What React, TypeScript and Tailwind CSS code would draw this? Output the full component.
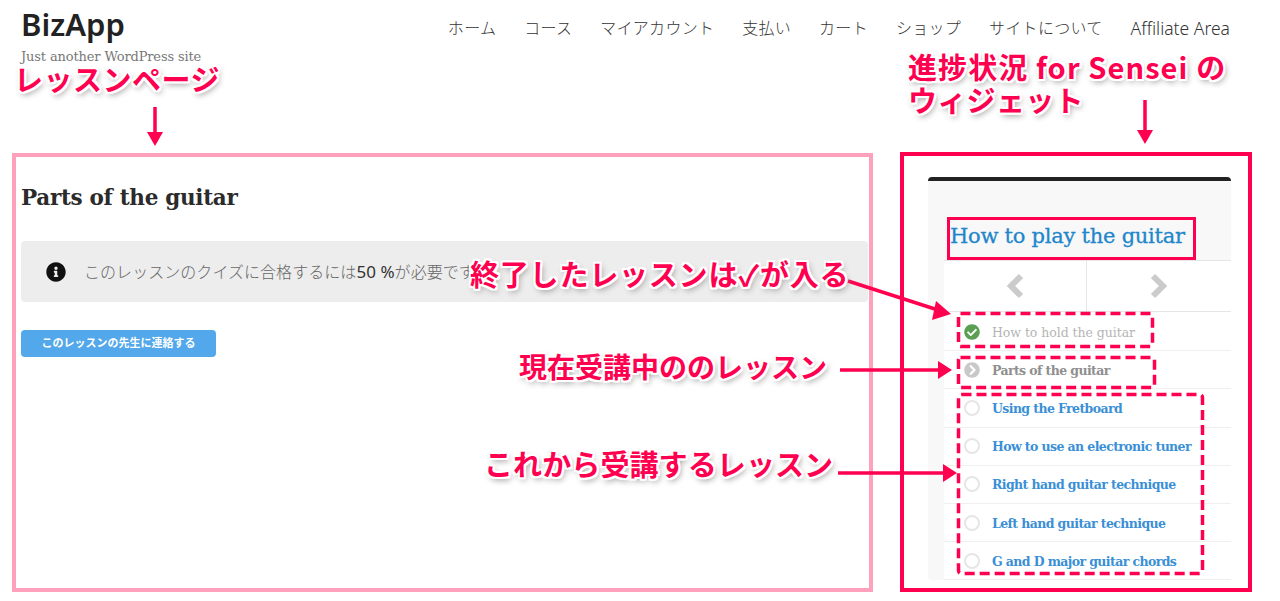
import { FaCheckCircle, FaChevronCircleRight, FaInfoCircle } from "react-icons/fa";

const navItems = ["ホーム", "コース", "マイアカウント", "支払い", "カート", "ショップ", "サイトについて"];

const lessons = [
  { title: "How to hold the guitar", state: "done" },
  { title: "Parts of the guitar", state: "current" },
  { title: "Using the Fretboard", state: "todo" },
  { title: "How to use an electronic tuner", state: "todo" },
  { title: "Right hand guitar technique", state: "todo" },
  { title: "Left hand guitar technique", state: "todo" },
  { title: "G and D major guitar chords", state: "todo" },
];

const labels = [
  { text: "レッスンページ", className: "left-[14px] top-[58px] text-[29px] tracking-[0.5px]" },
  { text: "進捗状況 for Sensei の", className: "left-[908px] top-[46px] text-[29px] tracking-[1.1px]" },
  { text: "ウィジェット", className: "left-[908px] top-[79px] text-[29px] tracking-[0.3px]" },
  { text: "終了したレッスンは✓が入る", className: "left-[470px] top-[253px] text-[29px] tracking-[0.8px]" },
  { text: "現在受講中ののレッスン", className: "left-[519px] top-[346px] text-[28px] tracking-[0px]" },
  { text: "これから受講するレッスン", className: "left-[484px] top-[443px] text-[29px] tracking-[0.1px]" },
];

function LessonIcon({ state }: { state: string }) {
  if (state === "done") return <FaCheckCircle className="h-4 w-4 shrink-0 text-[#5b9f52]" />;
  if (state === "current") return <FaChevronCircleRight className="h-4 w-4 shrink-0 text-[#c8c8c8]" />;
  return <span className="h-4 w-4 shrink-0 rounded-full border-2 border-[#e6e6e6]" />;
}

function Chevron({ dir }: { dir: "left" | "right" }) {
  return (
    <svg width="18" height="26" viewBox="0 0 18 26" fill="none" stroke="#cbcbcb" strokeWidth="6">
      <path d={dir === "left" ? "M15 3L5 13L15 23" : "M3 3L13 13L3 23"} />
    </svg>
  );
}

function Overlay() {
  const red = "#ff0050";
  return (
    <svg className="pointer-events-none absolute inset-0" width="1280" height="601" fill="none">
      <g stroke={red} strokeWidth="3.5">
        <path d="M155 107V134" />
        <path d="M1145 100V132" />
        <path d="M848 281L938 310" />
        <path d="M840 370H940" />
        <path d="M838 473H945" />
      </g>
      <g fill={red}>
        <path d="M147 132H163L155 146Z" />
        <path d="M1137 130H1153L1145 144Z" />
        <path d="M936 301L951 314L932 320Z" />
        <path d="M938 361L952 370L938 379Z" />
        <path d="M943 464L957 473L943 482Z" />
      </g>
      <g stroke={red} strokeWidth="3.5" strokeDasharray="10 5">
        <rect x="958.5" y="313.5" width="194" height="33" rx="2" />
        <rect x="958.5" y="357.5" width="196" height="30" rx="2" />
        <rect x="958.5" y="394.5" width="244" height="179" rx="3" />
      </g>
    </svg>
  );
}

export default function App() {
  return (
    <div className="relative h-[601px] w-[1280px] overflow-hidden bg-white font-['Noto_Sans','Noto_Sans_CJK_JP',sans-serif]">
      <header className="flex h-[152px] items-start justify-between pl-[21px] pr-[50px]">
        <div className="pt-[5px]">
          <div className="text-[31px] font-semibold leading-[38px] text-[#222]">BizApp</div>
          <div className="mt-[5px] font-['DejaVu_Serif',serif] text-[13px] leading-[18px] tracking-[-0.14px] text-[#777]">Just another WordPress site</div>
        </div>
        <nav className="flex items-center gap-[28px] pt-[16px] text-[16px] font-light leading-[24px] tracking-[0.28px] text-[#333]">
          {navItems.map((item) => (
            <span key={item}>{item}</span>
          ))}
          <span className="text-[17.5px] tracking-[0px]">Affiliate Area</span>
        </nav>
      </header>

      <main className="flex items-start pl-[12px]">
        <section className="mt-px h-[439px] w-[861px] border-4 border-[#ffa0bd] pl-[5px] pt-[25px]">
          <h1 className="font-['DejaVu_Serif',serif] text-[21.5px] font-bold leading-[32px] tracking-[-0.3px] text-[#2b2b2b]">Parts of the guitar</h1>
          <div className="mt-[27px] flex h-[61px] w-[847px] items-center overflow-hidden rounded bg-[#ededed] pl-[25px]">
            <FaInfoCircle className="h-5 w-5 shrink-0 text-[#111]" />
            <p className="ml-[18px] whitespace-nowrap text-[16px] font-light tracking-[0.05px] text-[#666]">
              このレッスンのクイズに合格するには<span className="text-[17px] font-normal text-[#333]">50 %</span>が必要です。
            </p>
          </div>
          <button className="mt-[28px] h-[27px] w-[195px] rounded bg-[#52a8ea] text-[11px] font-bold text-white">このレッスンの先生に連絡する</button>
        </section>

        <aside className="ml-[27px] h-[440px] w-[352px] border-4 border-[#ff0050] pl-[24px] pt-[21px]">
          <div className="w-[303px] rounded border-t-4 border-[#222] bg-[#f8f8f8] pl-[16px]">
            <h2 className="ml-[3px] mt-[36px] h-[43px] w-[249px] whitespace-nowrap border-[3px] border-[#ff0050] font-['DejaVu_Serif',serif] text-[21px] leading-[32px] tracking-[-0.25px] text-[#1e86cb] [-webkit-text-stroke:0.3px_#1e86cb]">How to play the guitar</h2>
            <div className="flex h-[52px] border-y border-[#e6e6e6] bg-white">
              <div className="flex w-[143px] items-center justify-center border-r border-[#e6e6e6]">
                <Chevron dir="left" />
              </div>
              <div className="flex flex-1 items-center justify-center">
                <Chevron dir="right" />
              </div>
            </div>
            <ul className="bg-white pt-px">
              {lessons.map((lesson) => (
                <li key={lesson.title} className="flex h-[38.2px] items-center gap-[12px] border-b border-[#efefef] pl-[20px] font-['DejaVu_Serif',serif] text-[12.5px]">
                  <LessonIcon state={lesson.state} />
                  <span
                    className={
                      lesson.state === "done"
                        ? "pt-[3px] tracking-[-0.05px] text-[#b5b5b5]"
                        : lesson.state === "current"
                          ? "pt-[3px] font-bold tracking-[-0.6px] text-[#8f8f8f]"
                          : "pt-[3px] font-bold tracking-[-0.6px] text-[#3a8fd6]"
                    }
                  >
                    {lesson.title}
                  </span>
                </li>
              ))}
            </ul>
          </div>
        </aside>
      </main>

      <Overlay />
      {labels.map((label) => (
        <div
          key={label.text}
          className={`absolute whitespace-nowrap font-['Noto_Sans_CJK_JP','Noto_Sans',sans-serif] font-bold leading-[40px] text-[#ff0050] [text-shadow:-2px_0_0_#fff,2px_0_0_#fff,0_-2px_0_#fff,0_2px_0_#fff,-2px_-2px_0_#fff,2px_2px_0_#fff,-2px_2px_0_#fff,2px_-2px_0_#fff,2px_3px_6px_#888] ${label.className}`}
        >
          {label.text}
        </div>
      ))}
    </div>
  );
}
